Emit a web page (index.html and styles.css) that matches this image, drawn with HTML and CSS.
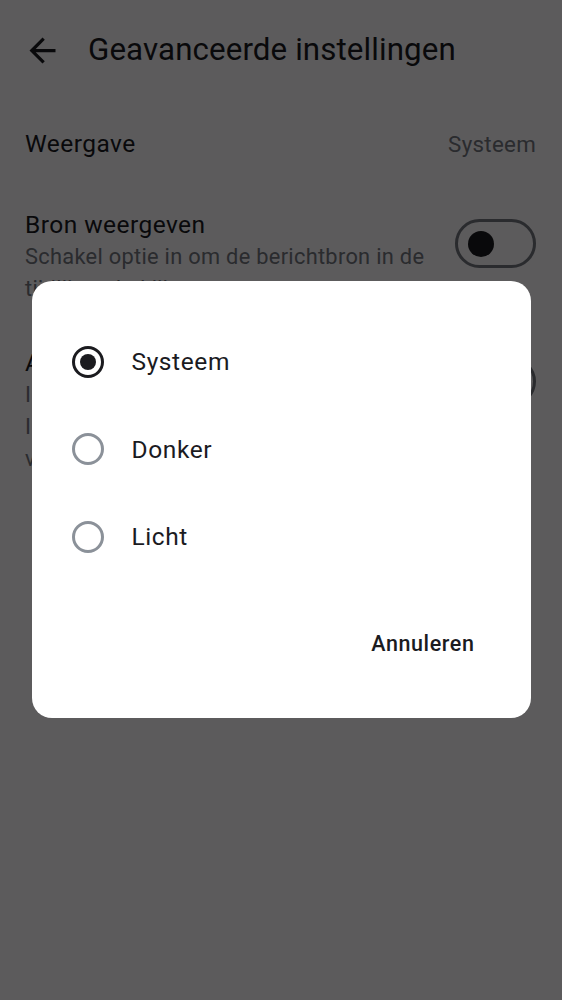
FILE: index.html
```html
<!DOCTYPE html>
<html lang="nl">
<head>
<meta charset="utf-8">
<title>Geavanceerde instellingen</title>
<link rel="stylesheet" href="styles.css">
</head>
<body>
<div class="screen">
  <header class="topbar">
    <svg class="back" viewBox="0 0 24 24" aria-hidden="true"><path d="M20 11H7.83l5.59-5.59L12 4l-8 8 8 8 1.41-1.41L7.83 13H20v-2z"/></svg>
    <h1 class="title">Geavanceerde instellingen</h1>
  </header>
  <div class="row simple">
    <span class="label">Weergave</span>
    <span class="value">Systeem</span>
  </div>
  <div class="row toggle-row">
    <div class="texts">
      <div class="label">Bron weergeven</div>
      <div class="desc">Schakel optie in om de berichtbron in de tijdlijn te bekijken</div>
    </div>
    <div class="switch"><span class="thumb"></span></div>
  </div>
  <div class="row toggle-row">
    <div class="texts">
      <div class="label">Automatisch uitklappen</div>
      <div class="desc">Indien ingeschakeld worden berichten<br>Inhoudswaarschuwingen automatisch<br>volledig weergegeven</div>
    </div>
    <div class="switch"><span class="thumb"></span></div>
  </div>

  <div class="scrim">
    <div class="dialog">
      <div class="options">
        <div class="option"><span class="radio checked"></span><span class="opt-label">Systeem</span></div>
        <div class="option"><span class="radio"></span><span class="opt-label">Donker</span></div>
        <div class="option"><span class="radio"></span><span class="opt-label">Licht</span></div>
      </div>
      <div class="actions">
        <button class="text-btn">Annuleren</button>
      </div>
    </div>
  </div>
</div>
</body>
</html>
```
FILE: styles.css
```css
* { box-sizing: border-box; }
html, body { margin: 0; padding: 0; }
body {
  font-family: Roboto, "Noto Sans", "Liberation Sans", sans-serif;
  color: #1b1b1f;
  background: #fff;
}
.screen {
  position: relative;
  width: 562px;
  height: 1000px;
  overflow: hidden;
  background: #fefbff;
}
.topbar {
  height: 100px;
  display: flex;
  align-items: center;
  padding-left: 23px;
}
.back {
  width: 39px;
  height: 39px;
  fill: #1b1b1f;
  flex: none;
}
.title {
  margin: 0 0 0 26px;
  font-size: 31.3px;
  font-weight: 400;
  letter-spacing: 0.1px;
  line-height: 38px;
}
.row {
  display: flex;
  padding: 0 26px 0 25px;
}
.simple {
  height: 86px;
  padding-top: 2px;
  align-items: center;
  justify-content: space-between;
}
.label {
  font-size: 24.5px;
  line-height: 32px;
  letter-spacing: 0.45px;
}
.value {
  font-size: 22.3px;
  color: #74777f;
  letter-spacing: 0.3px;
}
.toggle-row {
  padding-top: 23px;
  padding-bottom: 19px;
  align-items: flex-start;
  gap: 20px;
}
.texts { flex: 1; }
.desc {
  font-size: 21.8px;
  line-height: 32px;
  color: #74777f;
  letter-spacing: 0.3px;
}
.switch {
  flex: none;
  width: 81px;
  height: 49px;
  margin-top: 10px;
  border: 3px solid #74777f;
  border-radius: 25px;
  display: flex;
  align-items: center;
  padding-left: 10px;
}
.thumb {
  width: 26px;
  height: 26px;
  border-radius: 50%;
  background: #1b1b1f;
}
.scrim {
  position: absolute;
  inset: 0;
  background: rgba(0, 0, 0, 0.64);
  display: flex;
  align-items: center;
  justify-content: center;
}
.dialog {
  width: 499px;
  margin-top: -1px;
  background: #fff;
  border-radius: 20px;
  padding: 37px 44px 51px 40px;
}
.options {
  display: flex;
  flex-direction: column;
}
.option {
  height: 87.5px;
  display: flex;
  align-items: center;
  gap: 28px;
}
.radio {
  width: 32px;
  height: 32px;
  border-radius: 50%;
  border: 3px solid #8b9199;
  display: flex;
  align-items: center;
  justify-content: center;
  flex: none;
}
.radio.checked { border-color: #1b1b1f; }
.radio.checked::after {
  content: "";
  width: 16px;
  height: 16px;
  border-radius: 50%;
  background: #1b1b1f;
}
.opt-label {
  font-size: 24.5px;
  letter-spacing: 0.6px;
  color: #1b1b1f;
}
.actions {
  margin-top: 39px;
  display: flex;
  justify-content: flex-end;
}
.text-btn {
  height: 48px;
  padding: 0 12px;
  border: 0;
  background: none;
  font-family: Roboto, "Noto Sans", "Liberation Sans", sans-serif;
  font-size: 21.5px;
  font-weight: 500;
  letter-spacing: 0.6px;
  color: #1b1b1f;
}
```
